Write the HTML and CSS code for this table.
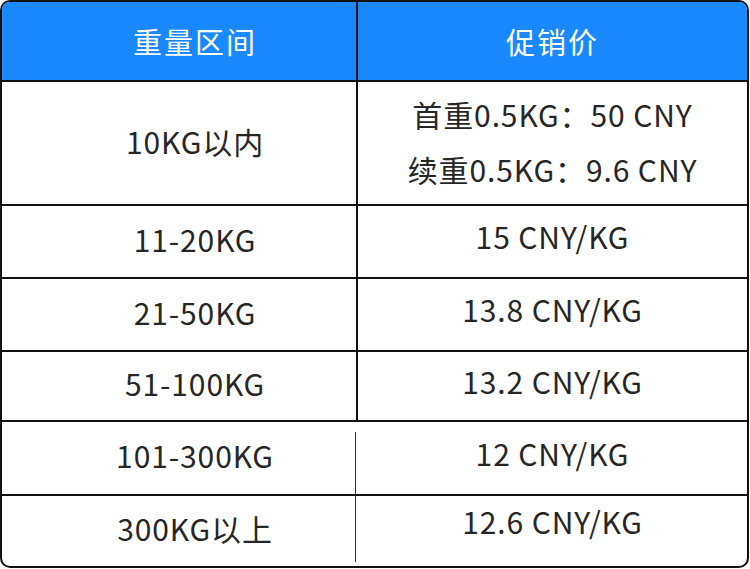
FILE: index.html
```html
<!DOCTYPE html>
<html lang="zh">
<head>
<meta charset="utf-8">
<link rel="stylesheet" href="styles.css">
</head>
<body>
<div class="table">
  <div class="row head">
    <div class="cell left">重量区间</div>
    <div class="cell right">促销价</div>
  </div>
  <div class="row r1">
    <div class="cell left">10KG以内</div>
    <div class="cell right multi">
      <span>首重0.5KG：50 CNY</span>
      <span>续重0.5KG：9.6 CNY</span>
    </div>
  </div>
  <div class="row r2">
    <div class="cell left">11-20KG</div>
    <div class="cell right">15 CNY/KG</div>
  </div>
  <div class="row r3">
    <div class="cell left">21-50KG</div>
    <div class="cell right">13.8 CNY/KG</div>
  </div>
  <div class="row r4">
    <div class="cell left">51-100KG</div>
    <div class="cell right">13.2 CNY/KG</div>
  </div>
  <div class="row r5 thin">
    <div class="cell left">101-300KG</div>
    <div class="cell right">12 CNY/KG</div>
  </div>
  <div class="row r6 thin last">
    <div class="cell left">300KG以上</div>
    <div class="cell right">12.6 CNY/KG</div>
  </div>
</div>
</body>
</html>
```
FILE: styles.css
```css
html, body {
  margin: 0;
  padding: 0;
  background: #ffffff;
}
body {
  font-family: "Noto Sans CJK SC", "Noto Sans", sans-serif;
  color: #262626;
}
.table {
  width: 749px;
  height: 568px;
  box-sizing: border-box;
  border: 2px solid #111;
  border-radius: 10px;
  overflow: hidden;
  display: flex;
  flex-direction: column;
}
.row {
  display: flex;
  border-bottom: 2px solid #111;
}
.row.last {
  border-bottom: none;
}
.cell {
  display: flex;
  align-items: center;
  justify-content: center;
  font-size: 30px;
  letter-spacing: 0.9px;
  white-space: nowrap;
}
.cell.left {
  width: 322px;
  padding-left: 32px;
  padding-bottom: 6px;
  border-right: 2px solid #111;
}
.cell.right {
  flex: 1;
  padding-bottom: 11px;
}
.row.thin .cell.left {
  border-right: 2px solid transparent;
  background-image: linear-gradient(#333, #333);
  background-size: 1px calc(100% - 10px);
  background-position: right 0.5px top 10px;
  background-repeat: no-repeat;
}
.row.last .cell.left {
  background-size: 1px calc(100% - 4px);
  background-position: right 0.5px top 0;
}
.head {
  background: #1a88ff;
  height: 78px;
}
.head .cell {
  color: #ffffff;
  font-size: 29px;
  letter-spacing: 2px;
  padding-bottom: 0;
}
.r1 { height: 122px; }
.r2 { height: 71px; }
.r3 { height: 71px; }
.r4 { height: 68px; }
.r5 { height: 72px; }
.r6 { height: 70px; }
.r1 .cell.left { padding-bottom: 4px; }
.r1 .cell.right {
  flex-direction: column;
  padding-bottom: 0;
  line-height: 55px;
  margin-top: -2px;
}
.r6 .cell.right { padding-bottom: 21px; }
```
